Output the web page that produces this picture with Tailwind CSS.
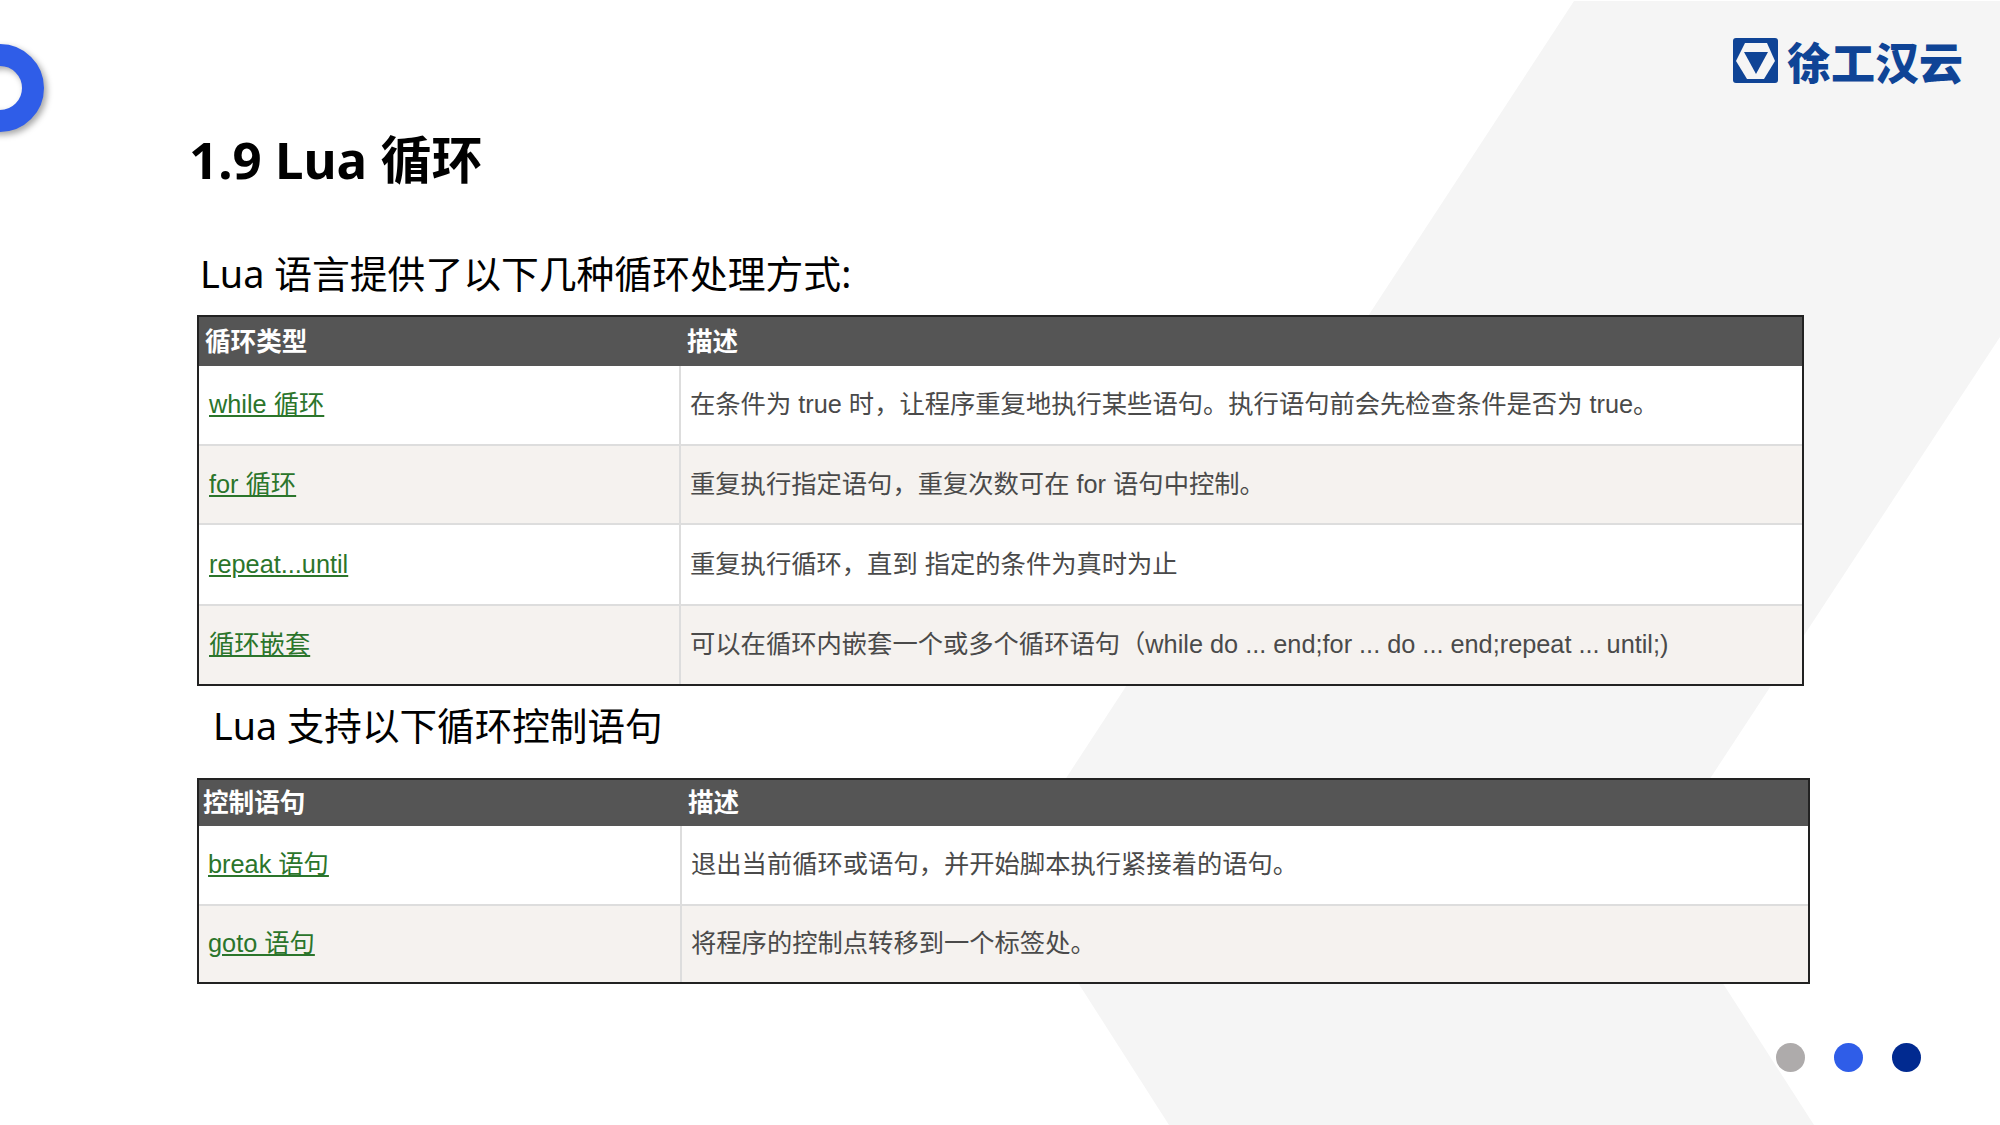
<!DOCTYPE html>
<html lang="zh-CN">
  <head>
    <meta charset="UTF-8" />
    <meta name="viewport" content="width=device-width, initial-scale=1.0" />
    <title>Lua 循环</title>
    <script src="https://cdn.jsdelivr.net/npm/@tailwindcss/browser@4"></script>
  </head>
  <body class="bg-white">
    <div class="relative w-[2000px] h-[1125px] overflow-hidden bg-white font-['Noto_Sans','Noto_Sans_CJK_SC',sans-serif]">
      <!-- Background band -->
      <svg class="absolute left-0 top-0" width="2000" height="1125" viewBox="0 0 2000 1125">
        <polygon points="1574,1 2000,1 2000,337 1650,870 1814,1125 1169,1125 1006,870" fill="#f5f5f5" />
      </svg>

      <!-- Half ring on the left edge -->
      <div class="absolute -left-[44px] top-[44px] w-[88px] h-[88px] rounded-full border-[22px] border-[#2f5de8] drop-shadow-[3px_3px_3px_rgba(0,0,0,0.35)]"></div>

      <div class="relative flex flex-col">
        <!-- Header -->
        <div class="flex justify-between items-start h-[249px]">
          <h1 class="ml-[189px] mt-[124px] text-[51px] leading-[70px] font-bold text-black">1.9 Lua 循环</h1>
          <div class="flex items-start mt-[38px] mr-[37px] gap-[9px]">
            <svg width="45" height="45" viewBox="0 0 45 45">
              <rect width="45" height="45" rx="3" fill="#0f4496" />
              <polygon points="12,5 34,5 42,23 31,41 14,41 3,23" fill="#f5f5f5" />
              <polygon points="11,14 35,14 23,36" fill="#0f4496" />
            </svg>
            <span class="pt-[3px] text-[44px] leading-[45px] font-black text-[#0f4496]">徐工汉云</span>
          </div>
        </div>

        <p class="ml-[200px] text-[37.8px] leading-[50px] text-black">Lua 语言提供了以下几种循环处理方式:</p>

        <!-- Loop types -->
        <table class="ml-[197px] mt-[16px] w-[1607px] h-[371px] table-fixed border-separate border-spacing-0 border-2 border-[#222] text-[25.3px] font-['Liberation_Sans','Noto_Sans_CJK_SC',sans-serif] text-[#4a4a4a]">
          <thead>
            <tr class="h-[49px] bg-[#555] text-white font-bold text-left text-[25.6px]">
              <th class="w-[482px] pl-[6px] pt-[2px]">循环类型</th>
              <th class="pl-[6px] pt-[2px]">描述</th>
            </tr>
          </thead>
          <tbody>
            <tr class="h-[78px] bg-white">
              <td class="pl-[10px] border-r-2 border-[#ddd]"><a href="#" class="underline text-[#2b752b]">while 循环</a></td>
              <td class="pl-[9px]">在条件为 true 时，让程序重复地执行某些语句。执行语句前会先检查条件是否为 true。</td>
            </tr>
            <tr class="h-[79px] bg-[#f5f2ef]">
              <td class="pl-[10px] border-t-2 border-r-2 border-[#ddd]"><a href="#" class="underline text-[#2b752b]">for 循环</a></td>
              <td class="pl-[9px] border-t-2 border-[#ddd]">重复执行指定语句，重复次数可在 for 语句中控制。</td>
            </tr>
            <tr class="h-[81px] bg-white">
              <td class="pl-[10px] border-t-2 border-r-2 border-[#ddd]"><a href="#" class="underline text-[#2b752b]">repeat...until</a></td>
              <td class="pl-[9px] border-t-2 border-[#ddd]">重复执行循环，直到 指定的条件为真时为止</td>
            </tr>
            <tr class="h-[80px] bg-[#f5f2ef]">
              <td class="pl-[10px] border-t-2 border-r-2 border-[#ddd]"><a href="#" class="underline text-[#2b752b]">循环嵌套</a></td>
              <td class="pl-[9px] border-t-2 border-[#ddd]">可以在循环内嵌套一个或多个循环语句（while do ... end;for ... do ... end;repeat ... until;)</td>
            </tr>
          </tbody>
        </table>

        <p class="ml-[213px] mt-[15px] text-[37.6px] leading-[50px] text-black">Lua 支持以下循环控制语句</p>

        <!-- Control statements -->
        <table class="ml-[197px] mt-[27px] w-[1613px] h-[206px] table-fixed border-separate border-spacing-0 border-2 border-[#222] text-[25.3px] font-['Liberation_Sans','Noto_Sans_CJK_SC',sans-serif] text-[#4a4a4a]">
          <thead>
            <tr class="h-[46px] bg-[#555] text-white font-bold text-left text-[25.6px]">
              <th class="w-[483px] pl-[4px]">控制语句</th>
              <th class="pl-[6px]">描述</th>
            </tr>
          </thead>
          <tbody>
            <tr class="h-[78px] bg-white">
              <td class="pl-[9px] border-r-2 border-[#ddd]"><a href="#" class="underline text-[#2b752b]">break 语句</a></td>
              <td class="pl-[9px]">退出当前循环或语句，并开始脚本执行紧接着的语句。</td>
            </tr>
            <tr class="h-[78px] bg-[#f5f2ef]">
              <td class="pl-[9px] border-t-2 border-r-2 border-[#ddd]"><a href="#" class="underline text-[#2b752b]">goto 语句</a></td>
              <td class="pl-[9px] border-t-2 border-[#ddd]">将程序的控制点转移到一个标签处。</td>
            </tr>
          </tbody>
        </table>
      </div>

      <!-- Page dots -->
      <div class="absolute left-[1776px] top-[1043px] flex gap-[29px]">
        <span class="w-[29px] h-[29px] rounded-full bg-[#aeabab]"></span>
        <span class="w-[29px] h-[29px] rounded-full bg-[#2f5de8]"></span>
        <span class="w-[29px] h-[29px] rounded-full bg-[#012a90]"></span>
      </div>
    </div>
  </body>
</html>
